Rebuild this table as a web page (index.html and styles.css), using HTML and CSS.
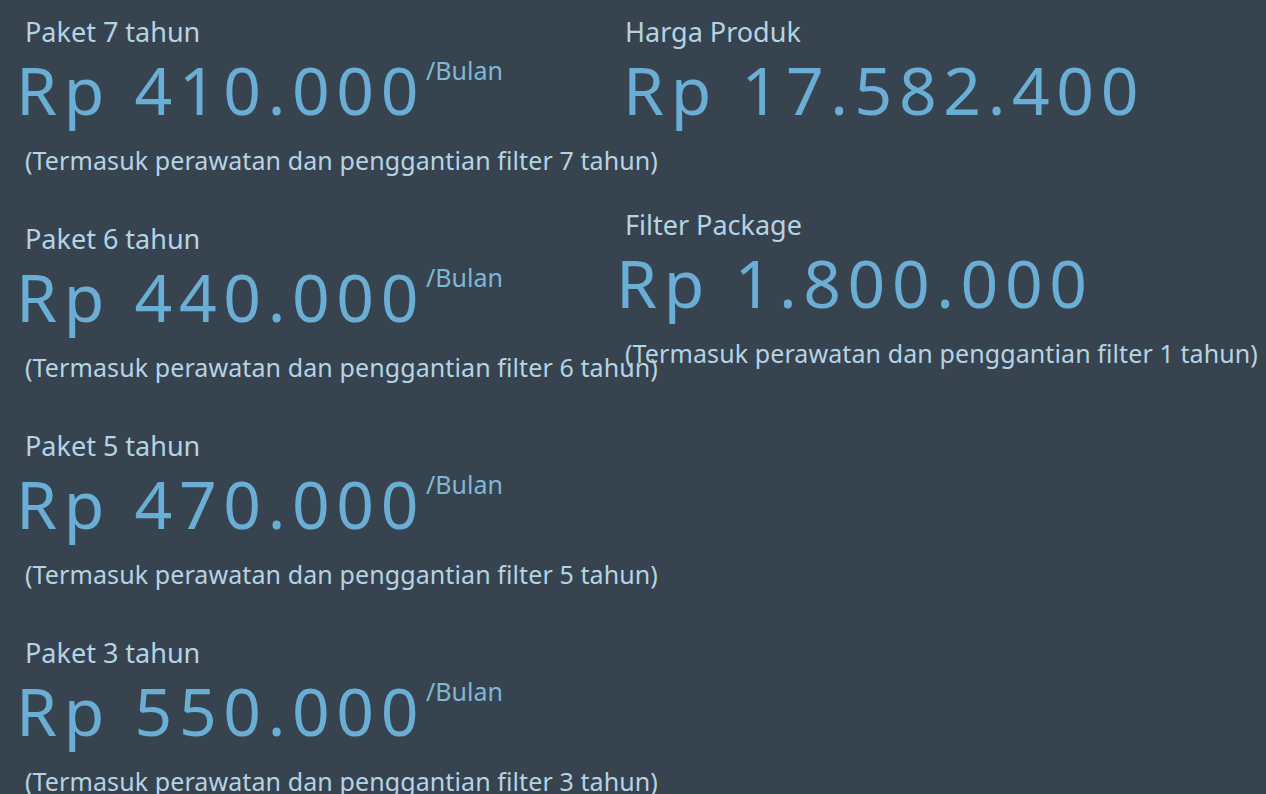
FILE: index.html
```html
<!DOCTYPE html>
<html lang="id">
<head>
<meta charset="utf-8">
<title>Harga Paket</title>
<link rel="stylesheet" href="styles.css">
</head>
<body>
<div class="page">
  <div class="col col-left">
    <div class="pkg">
      <div class="label">Paket 7 tahun</div>
      <div class="price"><span class="amount">Rp 410.000</span><sup class="per">/Bulan</sup></div>
      <div class="note">(Termasuk perawatan dan penggantian filter 7 tahun)</div>
    </div>
    <div class="pkg">
      <div class="label">Paket 6 tahun</div>
      <div class="price"><span class="amount">Rp 440.000</span><sup class="per">/Bulan</sup></div>
      <div class="note">(Termasuk perawatan dan penggantian filter 6 tahun)</div>
    </div>
    <div class="pkg">
      <div class="label">Paket 5 tahun</div>
      <div class="price"><span class="amount">Rp 470.000</span><sup class="per">/Bulan</sup></div>
      <div class="note">(Termasuk perawatan dan penggantian filter 5 tahun)</div>
    </div>
    <div class="pkg">
      <div class="label">Paket 3 tahun</div>
      <div class="price"><span class="amount">Rp 550.000</span><sup class="per">/Bulan</sup></div>
      <div class="note">(Termasuk perawatan dan penggantian filter 3 tahun)</div>
    </div>
  </div>
  <div class="col col-right">
    <div class="pkg pkg-product">
      <div class="label">Harga Produk</div>
      <div class="price price-product"><span class="amount">Rp 17.582.400</span></div>
    </div>
    <div class="pkg pkg-filter">
      <div class="label">Filter Package</div>
      <div class="price price-filter"><span class="amount">Rp 1.800.000</span></div>
      <div class="note">(Termasuk perawatan dan penggantian filter 1 tahun)</div>
    </div>
  </div>
</div>
</body>
</html>
```

FILE: styles.css
```css
* { box-sizing: border-box; }
html, body {
  margin: 0;
  padding: 0;
  background: #37444f;
  height: 100%;
  overflow: hidden;
}
body {
  font-family: "Noto Sans", "Open Sans", sans-serif;
  color: #b6d3e4;
}
.page {
  display: flex;
  padding: 15px 0 0 25px;
}
.col-left {
  width: 600px;
  flex: none;
}
.col-right {
  flex: 1;
}
.pkg {
  height: 207px;
  display: flex;
  flex-direction: column;
}
.label {
  font-size: 27px;
  line-height: 34px;
  color: #b6d3e4;
  white-space: nowrap;
}
.price {
  display: flex;
  align-items: flex-start;
  margin-left: -9px;
  height: 80px;
}
.price-product { margin-left: -2px; }
.price-filter { margin-left: -9px; }
.amount {
  font-size: 66px;
  line-height: 80px;
  letter-spacing: 6.6px;
  color: #6aaed6;
  white-space: nowrap;
}
.per {
  font-size: 25px;
  line-height: 28px;
  color: #7fb7d8;
  margin-top: 7px;
  margin-left: 1px;
}
.note {
  font-size: 25px;
  line-height: 34px;
  margin-top: 14px;
  letter-spacing: 0.1px;
  white-space: nowrap;
}
.pkg-product { height: 193px; }
```
